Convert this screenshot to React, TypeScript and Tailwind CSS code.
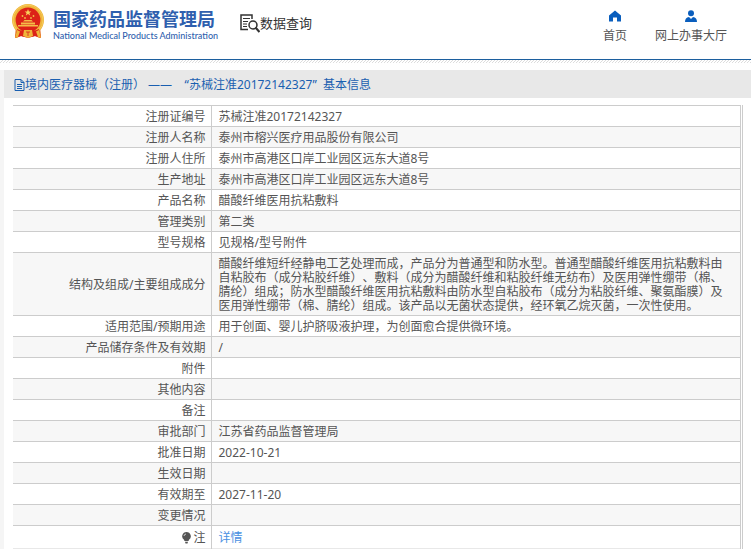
const rows: [string, string][] = [
  ["注册证编号", "苏械注准20172142327"],
  ["注册人名称", "泰州市榕兴医疗用品股份有限公司"],
  ["注册人住所", "泰州市高港区口岸工业园区远东大道8号"],
  ["生产地址", "泰州市高港区口岸工业园区远东大道8号"],
  ["产品名称", "醋酸纤维医用抗粘敷料"],
  ["管理类别", "第二类"],
  ["型号规格", "见规格/型号附件"],
  [
    "结构及组成/主要组成成分",
    "醋酸纤维短纤经静电工艺处理而成，产品分为普通型和防水型。普通型醋酸纤维医用抗粘敷料由自粘胶布（成分粘胶纤维）、敷料（成分为醋酸纤维和粘胶纤维无纺布）及医用弹性绷带（棉、腈纶）组成；防水型醋酸纤维医用抗粘敷料由防水型自粘胶布（成分为粘胶纤维、聚氨酯膜）及医用弹性绷带（棉、腈纶）组成。该产品以无菌状态提供，经环氧乙烷灭菌，一次性使用。",
  ],
  ["适用范围/预期用途", "用于创面、婴儿护脐吸液护理，为创面愈合提供微环境。"],
  ["产品储存条件及有效期", "/"],
  ["附件", ""],
  ["其他内容", ""],
  ["备注", ""],
  ["审批部门", "江苏省药品监督管理局"],
  ["批准日期", "2022-10-21"],
  ["生效日期", ""],
  ["有效期至", "2027-11-20"],
  ["变更情况", ""],
];

function Emblem() {
  return (
    <svg viewBox="0 0 34 36" className="h-9 w-[34px] shrink-0" aria-hidden="true">
      <path d="M5 24 L4 34 L10 32 L17 34 L24 32 L30 34 L29 24Z" fill="#d8231b" />
      <path d="M5 25 L4 34 L8 33 L10 27Z M29 25 L30 34 L26 33 L24 27Z" fill="#efb53a" />
      <circle cx="17" cy="16" r="16" fill="#efb53a" />
      <circle cx="17" cy="16" r="15" fill="none" stroke="#f6cb5c" strokeWidth="1" />
      <circle cx="17" cy="16" r="12.4" fill="#dc2218" />
      <path d="M17 5l.9 2.4h2.5l-2 1.5.8 2.5-2.2-1.5-2.2 1.5.8-2.5-2-1.5h2.5z" fill="#f9d35c" />
      <g fill="#f4bd48">
        <circle cx="11.5" cy="12" r=".9" />
        <circle cx="14" cy="14" r=".9" />
        <circle cx="20" cy="14" r=".9" />
        <circle cx="22.5" cy="12" r=".9" />
        <path d="M12 17.500h10l-1.500-1.500h-7zM10 20.500h14v-2H10zM7 22.500h20v-1.500H7z" />
      </g>
      <path d="M6 25Q10 27 13 26.500L14 33L10 32L4 34z M28 25Q24 27 21 26.500L20 33L24 32L30 34z" fill="#dc2218" />
      <path d="M6 26L4 34L7 33L9 27.500z M28 26L30 34L27 33L25 27.500z" fill="#efb53a" />
      <path d="M13 26h8l1 6l-5 2l-5-2z" fill="#efb53a" />
      <path d="M15 28h4M17 28v4" stroke="#dc2218" strokeWidth=".8" />
    </svg>
  );
}

export default function App() {
  return (
    <div className="bg-white font-['Noto_Sans','Noto_Sans_CJK_SC',sans-serif] text-xs text-[#555] [text-spacing-trim:space-all]">
      <header className="flex h-[59px] items-start">
        <a href="#" className="flex gap-2 pt-1 pl-[11px] text-[#2f5fae]">
          <Emblem />
          <span className="flex w-[161px] flex-col pt-[3px] whitespace-nowrap">
            <span className="font-['Noto_Sans_CJK_SC',sans-serif] text-lg leading-[22px] font-bold">国家药品监督管理局</span>
            <span className="font-[Lato,sans-serif] text-[9px] leading-[14px] font-medium">National Medical Products Administration</span>
          </span>
        </a>
        <a href="#" className="ml-[26px] flex items-start pt-[13px] text-[#333]">
          <svg viewBox="0 0 20 20" className="mt-px size-5" fill="none" stroke="#333" strokeWidth="1.500" aria-hidden="true">
            <path d="M12 5V1H1v14.500h7" />
            <path d="M3 4.500h7M3 7.500h5M3 10h4M3 12.500h4" strokeWidth="1.200" />
            <circle cx="13" cy="11" r="4" />
            <path d="M15.500 13.500l4 4.500" strokeWidth="2.200" />
          </svg>
          <span className="font-['Noto_Sans_CJK_SC',sans-serif] text-[13px] leading-5">数据查询</span>
        </a>
        <nav className="mr-6 ml-auto flex gap-7 pt-[10px]">
          <a href="#" className="flex flex-col items-center">
            <svg viewBox="0 0 12 12" className="size-3" fill="#0a5ebd" aria-hidden="true">
              <path d="M6 0.500L12 5.500V11.500H8V7.500H4V11.500H0V5.500z" />
            </svg>
            <span className="pt-[5px] leading-[18px]">首页</span>
          </a>
          <a href="#" className="flex flex-col items-center">
            <svg viewBox="0 0 12 12" className="size-3" fill="#0a5ebd" aria-hidden="true">
              <circle cx="6" cy="3.2" r="3" />
              <path d="M0 12Q0 7.500 4 7L6 9L8 7Q12 7.500 12 12z" />
            </svg>
            <span className="pt-[5px] leading-[18px]">网上办事大厅</span>
          </a>
        </nav>
      </header>
      <div className="h-px bg-[#1c5f9e]" />
      <div className="mb-[7px] h-[3px] bg-[linear-gradient(135deg,#fff_40%,#ddd_40%_60%,#fff_60%)] bg-size-[3px_3px]" />
      <main className="border-l-4 border-[#f5f5f5]">
        <h1 className="flex h-7 items-center bg-[#e8e8e8] pt-px pl-[10px] text-[#1a5fb0]">
          <svg viewBox="0 0 11 12" className="h-3 w-[11px]" fill="none" stroke="currentColor" aria-hidden="true">
            <path d="M1 .5h6l3 3v8H1zM7 .5v3h3M3 5.500h5M3 7.500h5M3 9.500h5" />
          </svg>
          <span className="whitespace-pre">境内医疗器械（注册） ——    “苏械注准20172142327”&nbsp;&nbsp;基本信息</span>
        </h1>
        <div className="mt-[7px] mr-2 ml-[9px] border-r border-[#ccc] pr-px">
          <table className="w-full border-collapse leading-[14px]">
            <tbody>
              {rows.map(([label, value]) => (
                <tr key={label} className="border-y border-[#ccc] even:bg-[#f7f7f7]">
                  <th scope="row" className="w-[198px] border-r border-[#ccc] pt-1 pr-[5px] pb-[2px] text-right font-normal">{label}</th>
                  <td className="h-[21px] border-r border-[#ccc] pt-1 pr-4 pb-[2px] pl-[7px]">{value}</td>
                </tr>
              ))}
              <tr className="h-[23px] border-b border-[#e8e8e8]">
                <th scope="row" className="border-r border-[#ccc] pt-[2px] pr-[5px] text-right font-normal">
                  <span className="flex items-center justify-end gap-[2px]">
                    <svg viewBox="0 0 9 12" className="h-3 w-[9px]" fill="#555" aria-hidden="true">
                      <path d="M4.500 0a4.300 4.300 0 0 1 2.500 7.800L6.500 9h-4L2 7.800A4.300 4.300 0 0 1 4.500 0zM3 9.700h3L5.500 11.500h-2z" />
                      <path d="M2 4Q2.200 2.200 4 2" stroke="#fff" strokeWidth=".7" fill="none" />
                    </svg>
                    注
                  </span>
                </th>
                <td className="border-r border-[#ccc] pt-[2px] pl-[7px]">
                  <a href="#" className="text-[#4a90e2]">详情</a>
                </td>
              </tr>
            </tbody>
          </table>
        </div>
      </main>
    </div>
  );
}
